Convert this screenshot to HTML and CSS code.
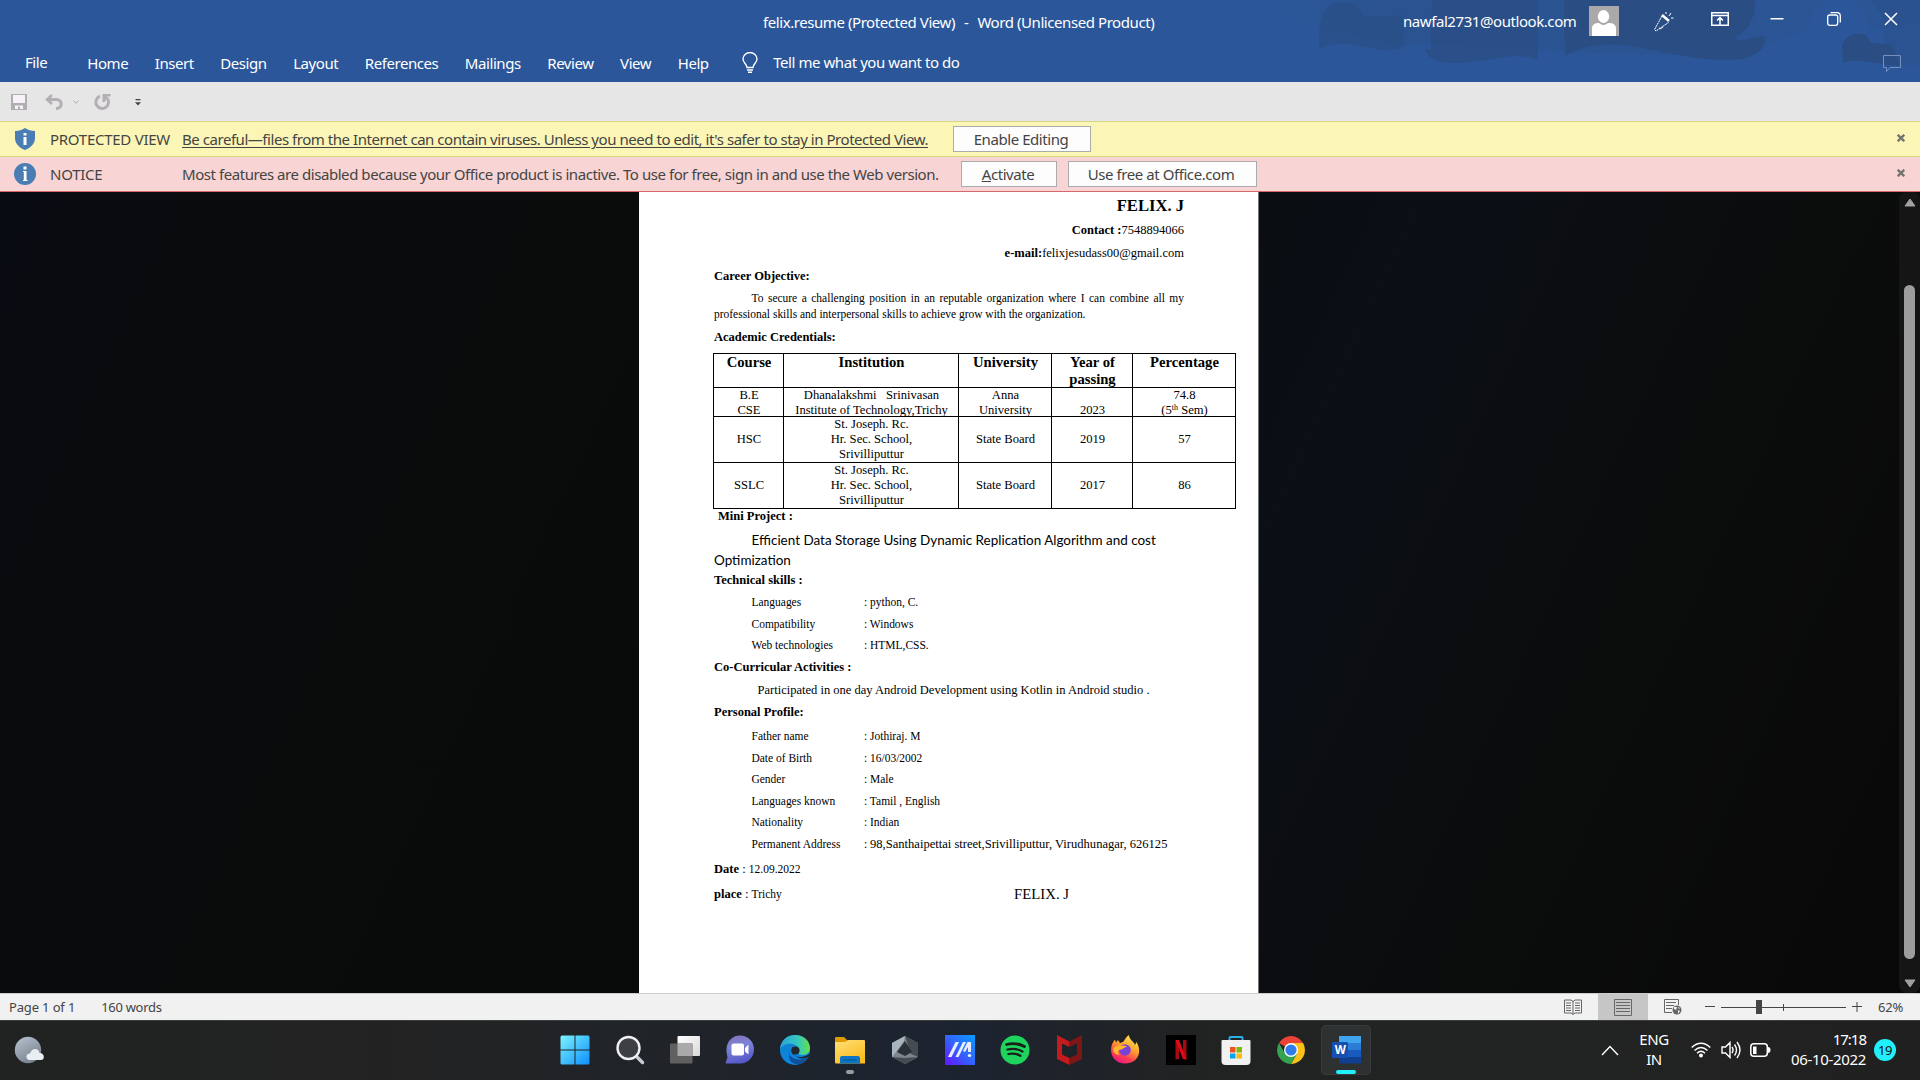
FILE: index.html
```html
<!DOCTYPE html>
<html lang="en">
<head>
<meta charset="utf-8">
<title>felix.resume (Protected View) - Word</title>
<link rel="stylesheet" href="styles.css">
</head>
<body>
<div class="app">
  <header class="header">
    <svg class="header-art" width="640" height="82" viewBox="0 0 640 82">
      <defs><linearGradient id="artFade"><stop offset="0" stop-color="#2a4f87" stop-opacity="0"/><stop offset=".15" stop-color="#2a4f87" stop-opacity=".5"/><stop offset="1" stop-color="#2a4f87" stop-opacity=".25"/></linearGradient></defs>
      <path fill="url(#artFade)" d="M0 0H640V20Q600 34 560 30T480 50Q360 60 260 50T120 46Q50 30 0 20Z"/>
      <g fill="#2a4e84">
        <path opacity=".65" d="M39 49C40 38 38 30 41 20C44 8 51 2 63 2C76 2 83 9 84 18C96 14 112 18 123 14L124 42C129 47 118 51 104 50C82 48 60 38 39 49Z"/>
        <path opacity=".8" d="M152 0H258V60C236 51 220 60 190 62C166 65 148 62 145 49L151 50Z"/>
        <path d="M284 0H475C476 15 471 28 455 38C460 44 476 35 484 36C488 46 476 58 460 59C430 64 386 52 350 46C320 42 302 46 285 56L286 48L284 38Z"/>
        <path d="M563 63L562 47C561 37 569 32 577 32C584 32 589 37 590 42L612 45L620 66C598 65 578 57 563 63Z"/>
        <path opacity=".35" d="M590 0H640V65L612 65L604 38Q608 18 590 0Z"/>
      </g>
      <path fill="#2b579a" d="M529 29C530 10 540 3 550 0H574C588 12 590 25 588 36C568 26 554 49 563 60H520Z"/>
    </svg>
    <div class="titlebar">
      <div class="doc-title"><span>felix.resume (Protected View)</span><span>-</span><span>Word (Unlicensed Product)</span></div>
      <div class="account">
        <span>nawfal2731@outlook.com</span>
        <svg width="30" height="30" viewBox="0 0 30 30"><path fill="#aaa8a8" d="M0 0H30V30H0Z"/><ellipse cx="14.5" cy="10.5" rx="5.7" ry="6.5" fill="#fff"/><path fill="#fff" d="M3 30V23C3 18 6 17 10 17Q14.500 21 19 17C24 17 27 18 27 23V30Z"/></svg>
      </div>
      <div class="window-buttons">
        <svg width="22" height="22" viewBox="0 0 22 22" fill="none" stroke="#fff" stroke-width="1"><path stroke-dasharray="2 .6" d="M9 5L1.500 18.500L3 20L15.500 11.500M6 17Q9 19 10 15"/><path stroke-width="2.600" d="M9 4L16 10"/><path d="M13 1V3M18 2L16 5M18 7H20.500"/></svg>
        <svg width="18" height="14" viewBox="0 0 18 14" fill="none" stroke="#fff"><path stroke-width="1.500" d="M.75.750H17.250V13.250H.750ZM1 3.500H17M9 13V5.500M6 8.500L9 5.500L12 8.500"/></svg>
        <svg width="14" height="14" viewBox="0 0 14 14"><path fill="#fff" d="M.5 6H13.500V7.500H.500Z"/></svg>
        <svg width="14" height="14" viewBox="0 0 14 14" fill="none" stroke="#fff" stroke-width="1.300"><rect x=".7" y="3" width="10" height="10.300" rx="2"/><path d="M3.500.700H10Q13.300.700 13.300 4V10.500"/></svg>
        <svg width="14" height="14" viewBox="0 0 14 14" stroke="#fff" stroke-width="1.500"><path d="M1 1L13 13M13 1L1 13"/></svg>
      </div>
    </div>
    <nav class="tabs">
      <span class="tab-file">File</span>
      <span>Home</span><span>Insert</span><span>Design</span><span>Layout</span><span>References</span><span>Mailings</span><span>Review</span><span>View</span><span>Help</span>
      <svg class="bulb" width="16" height="21" viewBox="0 0 16 21" fill="none" stroke="#fff" stroke-width="1.400"><path d="M5 15.500C5 12 1 11 1 7A6.800 6.300 0 0 1 15 7C15 11 11 12 11 15.500ZM5 18H11M6 20.200H10"/></svg>
      <span class="tell-me">Tell me what you want to do</span>
      <svg class="comment" width="18" height="18" viewBox="0 0 18 18" fill="none" stroke="#7590bd"><path d="M.5.500H17.500V12.500H7L3.500 16.500V12.500H.500Z"/></svg>
    </nav>
  </header>

  <div class="quick-access">
    <svg width="16" height="16" viewBox="0 0 16 16"><path fill="#b1adb3" d="M0 0H16V16H0Z"/><path fill="#f7f2f8" d="M2 1H14V9H2ZM4 11.500H12V15H9V12.500H7V15H4Z"/></svg>
    <svg class="undo" width="18" height="16" viewBox="0 0 18 16" fill="none" stroke="#b3afb4" stroke-width="3"><path d="M3 5.500H11C18 5.500 18 14.500 11 14.500"/><path stroke-width="2.500" d="M7 1L2 5.500L7 10"/></svg>
    <svg class="undo-caret" width="6" height="4" viewBox="0 0 6 4" fill="none" stroke="#b3afb4"><path d="M.5.500L3 3.300L5.500.500"/></svg>
    <svg class="redo" width="17" height="16" viewBox="0 0 17 16" fill="none" stroke="#b3afb4" stroke-width="3"><path d="M6 2.200A6.300 6.300 0 1 0 12.500 3.500"/><path fill="#b3afb4" stroke="none" d="M8.500 0H16.500V2.500H13L11 8H8.500Z"/></svg>
    <svg class="customize" width="6" height="7" viewBox="0 0 6 7"><path fill="#444" d="M.5 0H5.500V1.300H.500ZM0 3.200H6L3 6.500Z"/></svg>
  </div>

  <div class="message protected">
    <svg class="message-icon" width="22" height="22" viewBox="0 0 22 22"><path fill="#4a7db3" d="M11 0C14 2 17 3 21 3V10C21 16 16 20 11 22C6 20 1 16 1 10V3C5 3 8 2 11 0Z"/><path fill="#fff" d="M9.500 5H12.500V7.500H9.500ZM9.500 9H12.500V17H9.500Z"/></svg>
    <span class="label">PROTECTED VIEW</span>
    <a class="text link">Be careful—files from the Internet can contain viruses. Unless you need to edit, it's safer to stay in Protected View.</a>
    <span class="button enable">Enable Editing</span>
    <svg class="close" width="8" height="8" viewBox="0 0 8 8"><path stroke="#737373" stroke-width="2.300" d="M.7.700L7.300 7.300M7.300.700L.700 7.300"/></svg>
  </div>
  <div class="message notice">
    <svg class="message-icon" width="22" height="22" viewBox="0 0 22 22"><circle cx="11" cy="11" r="11" fill="#4a7db3"/><path fill="#fff" d="M9.500 3.500H12.500V6.500H9.500ZM9 8H12.500V17H13.500V18H9V17H9.800V9H9Z"/></svg>
    <span class="label">NOTICE</span>
    <span class="text">Most features are disabled because your Office product is inactive. To use for free, sign in and use the Web version.</span>
    <span class="button activate"><u>A</u>ctivate</span>
    <span class="button office">Use free at Office.com</span>
    <svg class="close" width="8" height="8" viewBox="0 0 8 8"><path stroke="#737373" stroke-width="2.300" d="M.7.700L7.300 7.300M7.300.700L.700 7.300"/></svg>
  </div>

  <main class="workspace">
    <article class="page">
      <p class="name">FELIX. J</p>
      <p class="contact"><b>Contact :</b>7548894066</p>
      <p class="contact"><b>e-mail:</b>felixjesudass00@gmail.com</p>
      <h2 class="career">Career Objective:</h2>
      <p class="objective">To secure a challenging position in an reputable organization where I can combine all my professional skills and interpersonal skills to achieve grow with the organization.</p>
      <h2 class="academic">Academic Credentials:</h2>
      <table class="credentials">
        <colgroup><col class="c1"><col class="c2"><col class="c3"><col class="c4"><col class="c5"></colgroup>
        <tr class="head"><th>Course</th><th>Institution</th><th>University</th><th><div class="cell">Year of<br>passing</div></th><th>Percentage</th></tr>
        <tr class="be"><td><div class="cell">B.E<br>CSE</div></td><td><div class="cell">Dhanalakshmi &nbsp; Srinivasan<br>Institute of Technology,Trichy</div></td><td><div class="cell">Anna<br>University</div></td><td><div class="cell"><br>2023</div></td><td><div class="cell">74.8<br>(5<span class="th">th</span> Sem)</div></td></tr>
        <tr class="school"><td>HSC</td><td>St. Joseph. Rc.<br>Hr. Sec. School,<br>Srivilliputtur</td><td>State Board</td><td>2019</td><td>57</td></tr>
        <tr class="school"><td>SSLC</td><td>St. Joseph. Rc.<br>Hr. Sec. School,<br>Srivilliputtur</td><td>State Board</td><td>2017</td><td>86</td></tr>
      </table>
      <h2 class="mini">Mini Project :</h2>
      <p class="project">Efficient Data Storage Using Dynamic Replication Algorithm and cost<br>Optimization</p>
      <h2 class="technical">Technical skills :</h2>
      <dl class="facts skills">
        <dt>Languages</dt><dd>: python, C.</dd>
        <dt>Compatibility</dt><dd>: Windows</dd>
        <dt>Web technologies</dt><dd>: HTML,CSS.</dd>
      </dl>
      <h2 class="activities">Co-Curricular Activities :</h2>
      <p class="activity">Participated in one day Android Development using Kotlin in Android studio .</p>
      <h2 class="personal">Personal Profile:</h2>
      <dl class="facts profile">
        <dt>Father name</dt><dd>: Jothiraj. M</dd>
        <dt>Date of Birth</dt><dd>: 16/03/2002</dd>
        <dt>Gender</dt><dd>: Male</dd>
        <dt>Languages known</dt><dd>: Tamil , English</dd>
        <dt>Nationality</dt><dd>: Indian</dd>
        <dt>Permanent Address</dt><dd>: <span class="large">98,Santhaipettai street,Srivilliputtur, Virudhunagar, 626125</span></dd>
      </dl>
      <p class="date"><b>Date</b> : <small>12.09.2022</small></p>
      <p class="place"><span><b>place</b> : <small>Trichy</small></span><span class="signature">FELIX. J</span></p>
    </article>
    <div class="scrollbar">
      <svg width="12" height="9" viewBox="0 0 12 9"><path fill="#a0a0a0" stroke="#a0a0a0" stroke-linejoin="round" d="M6 1L11 8H1Z"/></svg>
      <div class="thumb"></div>
      <svg width="12" height="9" viewBox="0 0 12 9"><path fill="#a0a0a0" stroke="#a0a0a0" stroke-linejoin="round" d="M6 8L11 1H1Z"/></svg>
    </div>
  </main>

  <footer class="status">
    <span class="pages">Page 1 of 1</span><span class="words">160 words</span>
    <div class="views">
      <span class="view"><svg width="18" height="16" viewBox="0 0 18 16" fill="none" stroke="#666"><path d="M.5 1H7L9 2.500L11 1H17.500V14H11L9 15.500L7 14H.500ZM9 2V15" /><path d="M2 4H7M2 6.500H7M2 9H7M2 11.500H7M11 4H16M11 6.500H16M11 9H16M11 11.500H16"/></svg></span>
      <span class="view active"><svg width="18" height="17" viewBox="0 0 18 17" fill="none" stroke="#666"><path d="M.5.500H17.500V16.500H.500ZM2 3.500H16M2 6.500H16M2 9.500H16M2 12.500H16"/></svg></span>
      <span class="view"><svg width="18" height="16" viewBox="0 0 18 16" fill="none" stroke="#666"><path d="M8 13.500H.500V.500H14.500V6M2 3.500H12M2 6.500H10M2 9.500H8"/><circle cx="13" cy="11" r="4.500" fill="#666" stroke="none"/><path fill="#f1f1f1" stroke="none" d="M10 8L13 8L12 11L10 10ZM14 11L16 12L14 15ZM14 8L16 9L15 10Z"/></svg></span>
    </div>
    <svg class="zoom" width="158" height="16" viewBox="0 0 158 16"><path stroke="#444" fill="none" d="M0 7.500H10M16 8.500H141M78.500 5V12M147 7.500H157M152 3V13"/><path fill="#444" d="M51 1H57V15H51Z"/></svg>
    <span class="percent">62%</span>
  </footer>

  <div class="taskbar">
    <svg class="weather" width="30" height="30" viewBox="0 0 30 30"><defs><linearGradient id="moon" x2=".6" y2="1"><stop stop-color="#bac4d2"/><stop offset="1" stop-color="#78828f"/></linearGradient></defs><circle cx="14" cy="14" r="13.200" fill="url(#moon)"/><path fill="#e9eef2" d="M15 24C11 23 12 17 16 17.500C18 11 25 12 25.500 17C31 17 31 24 27 24Z"/></svg>
    <div class="apps">
      <span><svg viewBox="0 0 30 30"><defs><linearGradient id="win" x2="1" y2="1"><stop stop-color="#7df3ff"/><stop offset="1" stop-color="#0c8ffb"/></linearGradient></defs><path fill="url(#win)" d="M.5 2Q.500.500 2 .500H14.500V14.500H.500ZM15.500.500H28Q29.500.500 29.500 2V14.500H15.500ZM.500 15.500H14.500V29.500H2Q.500 29.500.500 28ZM15.500 15.500H29.500V28Q29.500 29.500 28 29.500H15.500Z"/></svg></span>
      <span><svg viewBox="0 0 30 30"><path stroke="#c4ccd4" stroke-width="3.500" stroke-linecap="round" d="M21 21L27.500 27.500"/><circle cx="13.500" cy="13" r="11" fill="#3c4042" stroke="#eef0f2" stroke-width="2.400"/></svg></span>
      <span><svg viewBox="0 0 30 30"><defs><linearGradient id="pane" x2="1" y2="1"><stop stop-color="#fff"/><stop offset="1" stop-color="#d9d9d9"/></linearGradient></defs><rect x="7.500" y="1" width="22.500" height="20" rx="1" fill="url(#pane)"/><rect x="0" y="8.500" width="22.500" height="20" rx="1" fill="#606060"/><path fill="#a9a9a9" d="M7.500 8.500H22.500V21H7.500Z"/></svg></span>
      <span><svg viewBox="0 0 30 30"><defs><linearGradient id="chat" x1=".2" x2=".5" y2="1"><stop stop-color="#8971b8"/><stop offset=".4" stop-color="#7b83d6"/><stop offset="1" stop-color="#5557c9"/></linearGradient></defs><path fill="url(#chat)" d="M.5 28.500L2.500 22C-1 10 5 .500 15 .500A14 14 0 0 1 15 28.500Z"/><rect x="6.500" y="8.500" width="12.500" height="12" rx="2" fill="#fff"/><path fill="#fff" d="M20 13L23.500 9.500V19.500L20 16.500Z"/></svg></span>
      <span><svg viewBox="0 0 30 30"><defs><linearGradient id="edgeTop"><stop stop-color="#2aa3dc"/><stop offset=".6" stop-color="#34c8bc"/><stop offset="1" stop-color="#66e04c"/></linearGradient><linearGradient id="edgeLow" x2=".3" y2="1"><stop stop-color="#137fc7"/><stop offset="1" stop-color="#0986e4"/></linearGradient></defs><circle cx="15" cy="15" r="15" fill="url(#edgeLow)"/><path fill="#124f9d" d="M9 14C8 22 15 27 27 23C22 32 11 31 9 22Z"/><path fill="#23272a" d="M13 12C9 16 13 22 20 22C25 22 27 20 31 18L30 20L27.500 22.500C23 25 16 23 13.500 19Z"/><path fill="url(#edgeTop)" d="M0 14C1 5 7 0 15 0C24 0 30 6 30 13C30 20 23 21 19 19C17 18 20 17 19 14C17 8 5 6 0 14Z"/><circle cx="15.500" cy="15.500" r="4" fill="#23272a"/></svg></span>
      <span class="running"><svg viewBox="0 0 30 30"><defs><linearGradient id="folder" x2=".6" y2="1"><stop stop-color="#ffe07a"/><stop offset="1" stop-color="#fbbc1d"/></linearGradient></defs><path fill="#dd9b00" d="M0 3Q0 2 1 2H9L13 6V10H0Z"/><path fill="url(#folder)" d="M0 7L10 7L13 5H29Q30 5 30 6V28.500H1Q0 28.500 0 27Z"/><path fill="#0c76c4" d="M5 28.500V23Q5 21 7 21H23Q25 21 25 23V28.500Z"/><path stroke="#07508d" d="M8.500 25H21.500"/></svg></span>
      <span><svg viewBox="0 0 30 30"><path fill="#7e868d" d="M15 1L28 8V22L15 29L2 22V8Z"/><path fill="#444b52" d="M15 1L28 8V22L21 19ZM2 22L15 29L27 22L15 23Z"/><path fill="#2a3036" d="M15 6L22 17L15 21L7 17Z"/><path fill="#a9b5be" d="M15 1L2 8V22L6 17L14 6Z"/></svg></span>
      <span><svg viewBox="0 0 30 30"><defs><linearGradient id="ma" x1="1" x2="0" y2="1"><stop stop-color="#079cff"/><stop offset=".5" stop-color="#3364ff"/><stop offset="1" stop-color="#6712ff"/></linearGradient></defs><path fill="url(#ma)" d="M0 0H30V30H0Z"/><path fill="#e7edff" d="M3 22L10.500 7H14L6.500 22ZM10.500 22L18 7H21L13.500 22ZM18 16L22.500 7H26V17H23V12L20 17Z"/><circle cx="24.500" cy="20.500" r="1.600" fill="#fff"/></svg></span>
      <span><svg viewBox="0 0 30 30"><circle cx="15" cy="15" r="14.500" fill="#1ed35e"/><path fill="none" stroke="#16211a" stroke-linecap="round" stroke-width="2.800" d="M6.500 9.500Q16 7 24.500 11.500"/><path fill="none" stroke="#16211a" stroke-linecap="round" stroke-width="2.300" d="M7.500 14.500Q16 12.500 22.500 16.500M8.500 19Q15 17.500 20.500 20.800"/></svg></span>
      <span><svg viewBox="0 0 30 30"><path fill="#c51b1f" d="M2 0L14.500 6.500V12L7 8.500V19.500L14.500 23V30L2 24Z"/><path fill="#7d1716" d="M27 0L14.500 6.500V12L22 8.500V19.500L14.500 23V30L27 24Z"/></svg></span>
      <span><svg viewBox="0 0 30 30"><defs><linearGradient id="fox" x1=".8" x2=".3" y2="1"><stop stop-color="#fff14f"/><stop offset=".45" stop-color="#ff9d2d"/><stop offset=".75" stop-color="#ff3f50"/><stop offset="1" stop-color="#e71587"/></linearGradient></defs><path fill="url(#fox)" d="M15 28.500C6 28.500 1 22 1 15C1 10 3 7 5 4.500L6 7.500L8 5L10 8L13 7C15 5 16 1.500 19 0C19 5 24 6 25 10L26.500 7C33 18 27 28.500 15 28.500Z"/><circle cx="15" cy="15" r="5.800" fill="#7a43d7"/><path fill="#ffb52c" d="M3 14C6 9 10 11 17 11C16 13 13 12.500 12 14.500C8 14 7 17 10 20C5 20 3 17 3 14Z"/></svg></span>
      <span><svg viewBox="0 0 30 30"><path d="M0 0H30V30H0Z"/><path fill="#a60a13" d="M9.500 5H13V24L9.500 24.500ZM17 5H20.500V24.500L17 24Z"/><path fill="#e50914" d="M9.500 5H13L20.500 24.500L17 24Z"/></svg></span>
      <span><svg viewBox="0 0 30 30"><path fill="none" stroke="#2caee8" stroke-width="2" d="M8.500 7V3Q8.500 2 9.500 2H20.500Q21.500 2 21.500 3V7"/><path fill="#f1f1f1" d="M.5 6Q.500 5 1.500 5H28.500Q29.500 5 29.500 6V26Q29.500 30 25.500 30H4.500Q.500 30 .500 26Z"/><path fill="#f25022" d="M9 12H14.500V17.500H9Z"/><path fill="#7fba00" d="M15.500 12H21V17.500H15.500Z"/><path fill="#00a4ef" d="M9 18.500H14.500V23.500H9Z"/><path fill="#ffb900" d="M15.500 18.500H21V23.500H15.500Z"/></svg></span>
      <span><svg viewBox="0 0 30 30"><path fill="#ea4235" d="M15 15L2.900 8A14 14 0 0 1 27.100 8Z"/><path fill="#fbc116" d="M15 15V8H27.100A14 14 0 0 1 15 29L21 18.500Z"/><path fill="#34a350" d="M15 15L21 18.500L15 29A14 14 0 0 1 2.900 8L9 18.500Z"/><circle cx="15" cy="15" r="7" fill="#fff"/><circle cx="15" cy="15" r="5.600" fill="#2f7de9"/></svg></span>
      <span class="current"><svg viewBox="0 0 30 30"><path fill="#41a5ee" d="M8 1H30V8H8Z"/><path fill="#2b7cd3" d="M8 8H30V15H8Z"/><path fill="#185abd" d="M8 15H30V22H8Z"/><path fill="#103f91" d="M8 22H30V28.500H8Z"/><rect x="1" y="7" width="16" height="16" rx="1" fill="#174fb0"/><text x="9" y="19" text-anchor="middle" fill="#fff" font-family="Noto Sans, sans-serif" font-weight="700" font-size="11.500">W</text></svg></span>
    </div>
    <div class="tray">
      <svg class="chevron" width="18" height="11" viewBox="0 0 18 11" fill="none" stroke="#fff" stroke-width="1.400"><path d="M1 10L9 1.500L17 10"/></svg>
      <div class="lang"><span>ENG</span><span>IN</span></div>
      <svg class="wifi" width="20" height="16" viewBox="0 0 20 16" fill="none" stroke="#fff" stroke-width="1.400"><path d="M.7 5.500Q10-3 19.300 5.500M3.500 8.500Q10 2.500 16.500 8.500M6 11.200Q10 7.500 14 11.200"/><circle cx="10" cy="13.500" r="2" fill="#fff" stroke="none"/></svg>
      <svg class="volume" width="20" height="18" viewBox="0 0 20 18" fill="none" stroke="#fff" stroke-width="1.400"><path d="M1 6H4.500L9 1.500V16.500L4.500 12H1ZM11 6Q13 9 11 12M13.500 3.500Q17.500 9 13.500 14.500M16 1Q22 9 16 17"/></svg>
      <svg class="battery" width="21" height="14" viewBox="0 0 21 14"><rect x=".8" y=".8" width="16.500" height="12.400" rx="3" fill="none" stroke="#fff" stroke-width="1.500"/><path fill="#fff" d="M3 3.500H6.500V11H3ZM18 4Q20.500 4 20.500 7T18 10Z"/></svg>
      <div class="clock"><span class="time">17:18</span><span>06-10-2022</span></div>
      <span class="badge">19</span>
    </div>
  </div>
</div>
</body>
</html>
```
FILE: styles.css
```css
* { box-sizing: border-box; }
body { margin: 0; background: #000; }
.app {
  width: 1920px; height: 1080px; overflow: hidden;
  display: flex; flex-direction: column;
  font: 15px/20px "Noto Sans", "Open Sans", sans-serif;
  letter-spacing: -0.43px; white-space: nowrap;
}
svg { display: block; flex: none; }

/* Title bar and ribbon tabs */
.header { position: relative; height: 82px; flex: none; background: #2b579a; color: #fff; }
.header-art { position: absolute; top: 0; right: 0; }
.titlebar { position: relative; height: 44px; display: grid; grid-template-columns: 1403px 216px 1fr; }
.doc-title { display: flex; gap: 9px; padding: 12px 0 0 763px; }
.account { display: flex; justify-content: space-between; padding-top: 6px; line-height: 30px; }
.window-buttons { display: flex; padding: 12px 22px 0 34px; }
.window-buttons svg:nth-child(1) { margin-top: -1px; }
.window-buttons svg:nth-child(2) { margin-left: 36px; }
.window-buttons svg:nth-child(3) { margin-left: 41px; }
.window-buttons svg:nth-child(4) { margin-left: 43px; }
.window-buttons svg:nth-child(5) { margin-left: auto; }
.tabs { position: relative; display: flex; gap: 26.5px; padding: 9px 19px 0 25px; }
.tab-file { margin: -1px 13.500px 0 0; }
.bulb { margin: -1px 0 0 7px; }
.tell-me { margin: -1px 0 0 -11.500px; }
.comment { margin: 2px 0 0 auto; }

/* Quick access toolbar */
.quick-access { display: flex; align-items: center; height: 39px; flex: none; padding: 1px 0 0 11px; background: #e6e6e6; }
.undo { margin-left: 18px; }
.undo-caret { margin-left: 10px; }
.redo { margin-left: 15px; }
.customize { margin-left: 24px; }

/* Message bars */
.message { display: flex; align-items: center; height: 35px; flex: none; color: #444; }
.protected { background: #fcf6b6; border-top: 1px solid #d7d783; }
.notice { height: 36px; background: #f8d4d4; border-top: 1px solid #d7d783; border-bottom: 1px solid #d8676b; }
.message-icon { margin-left: 14px; }
.label { width: 132px; margin-left: 14px; letter-spacing: -0.270px; }
.text { width: 746px; letter-spacing: -0.457px; }
.notice .text { width: 757px; letter-spacing: -0.445px; }
.link { text-decoration: underline; text-underline-offset: 2px; }
.button { height: 26px; line-height: 24px; border: 1px solid #ababab; background: #fdfdfd; text-align: center; }
.enable { width: 138px; margin-left: 25px; padding-right: 2px; }
.activate { width: 96px; margin-left: 22px; padding-right: 2px; }
.office { width: 189px; margin-left: 11px; padding-right: 3px; }
.close { margin: -2px 15px 0 auto; }

/* Document area */
.workspace { display: grid; grid-template-columns: 639px 620px 1fr 21px; height: 801px; flex: none; overflow: hidden; background: linear-gradient(115deg, #080b12 0, #0a0b0c 12%, #090a0a 45%, #0b0f16 62%, #0b0c0c 80%, #080808 100%); }
.page {
  grid-column: 2; padding: 6px 74px 0 75px; background: #fff; border-right: 1px solid #777; color: #000;
  font: 12.53px/16px "Liberation Serif", "Times New Roman", serif; letter-spacing: 0;
}
.page p, .page h2, .page dl, .page dd { margin: 0; }
.page h2 { font-size: 12.53px; line-height: 16px; }
.page .name { font-size: 16.6px; font-weight: 700; text-align: right; }
.page .contact { margin-top: 8px; text-align: right; }
.page .contact + .contact { margin-top: 7px; }
.page .career { margin-top: 7px; }
.page .objective { margin-top: 6px; font-size: 11.47px; text-align: justify; text-indent: 37.500px; white-space: normal; }
.page .academic { margin-top: 7px; }
.credentials { width: 522px; margin: 8px 0 0 -1px; table-layout: fixed; border-collapse: collapse; text-align: center; font-size: 12.6px; line-height: 15px; }
.c1 { width: 70px; } .c2 { width: 175px; } .c3 { width: 93px; } .c4 { width: 81px; } .c5 { width: 103px; }
.credentials th, .credentials td { padding: 0 0 0 1px; border: 1px solid #000; }
.credentials th { vertical-align: top; font-size: 14.65px; line-height: 17px; }
.cell { overflow: hidden; }
.head .cell { height: 33px; }
.be .cell { height: 28px; }
.th { font-size: 8px; vertical-align: 4px; line-height: 0; }
.page .mini { margin: -1px 0 0 4px; }
.page .project { margin-top: 6px; font: 13.48px/20px Lato, Carlito, sans-serif; text-indent: 37.500px; }
.page .technical { margin-top: 2px; }
.facts { display: grid; grid-template-columns: 112.5px 1fr; row-gap: 5.5px; padding-left: 37.500px; font-size: 11.47px; }
.page .skills { margin-top: 6px; }
.large { font-size: 12.56px; line-height: 1; }
.page .activities { margin-top: 6px; }
.page .activity { margin: 7px 0 0 43.500px; }
.page .personal { margin-top: 6px; }
.page .profile { margin-top: 8px; }
.page .date { margin-top: 9.5px; }
.page small { font-size: 11.5px; }
.page .place { display: flex; margin-top: 9px; }
.signature { margin-left: auto; margin-right: 115px; font-size: 14.75px; }
.scrollbar { grid-column: 4; display: flex; flex-direction: column; align-items: center; padding: 6px 0 5px 0; border-radius: 8px; background: #151515; }
.thumb { width: 11px; height: 674px; margin: 78px 0 auto; border-radius: 6px; background: #9d9d9d; }

/* Status bar */
.status { display: flex; align-items: center; height: 27px; flex: none; padding: 0 16px 0 9px; border-top: 1px solid #d0cccc; background: #f1f1f1; color: #444; font-size: 13px; line-height: 26px; letter-spacing: -0.150px; }
.words { margin-left: 26px; letter-spacing: -0.300px; }
.views { display: flex; height: 26px; margin: 0 57px 0 auto; }
.view { display: grid; place-items: center; width: 50px; }
.active { background: #c6c6c6; }
.views { margin-right: 7px; }
.percent { width: 26px; margin-left: 15px; }

/* Taskbar */
.taskbar { display: flex; height: 60px; flex: none; padding-bottom: 1px; border-top: 1px solid #3b3e3f; background: linear-gradient(90deg, #202322 0, #222 20%, #202429 35%, #1c2330 50%, #212222 62%, #222423 80%, #202020 100%); color: #fff; }
.weather { margin: 15px 0 0 14px; }
.apps { display: grid; grid-template-columns: repeat(15, 55.050px); margin-left: 503.5px; align-items: center; justify-items: center; }
.apps span { position: relative; display: grid; place-items: center; width: 50px; height: 50px; border-radius: 5px; }
.apps svg { width: 30px; height: 30px; }
.current { background: #2e3131; box-shadow: inset 0 0 0 1px #383b3b; }
.running::after, .current::after { content: ""; position: absolute; left: 21px; bottom: 1px; width: 8px; height: 4px; border-radius: 2px; background: #9a9b9c; }
.current::after { left: 15px; width: 20px; background: #22effc; }
.tray { display: flex; align-items: center; margin-left: auto; padding-right: 24px; }
.chevron { margin-right: 20px; }
.lang, .clock { display: grid; margin-top: -2px; text-align: center; }
.lang { width: 30px; }
.wifi { margin-left: 22px; }
.volume { margin-left: 10px; }
.battery { margin-left: 9px; }
.clock { width: 77px; margin-left: 18px; text-align: right; letter-spacing: -0.330px; }
.time { letter-spacing: -1px; }
.badge { width: 22px; height: 22px; margin-left: 8px; border-radius: 50%; background: #22effc; color: #111; font-size: 13px; line-height: 22px; text-align: center; }
```
